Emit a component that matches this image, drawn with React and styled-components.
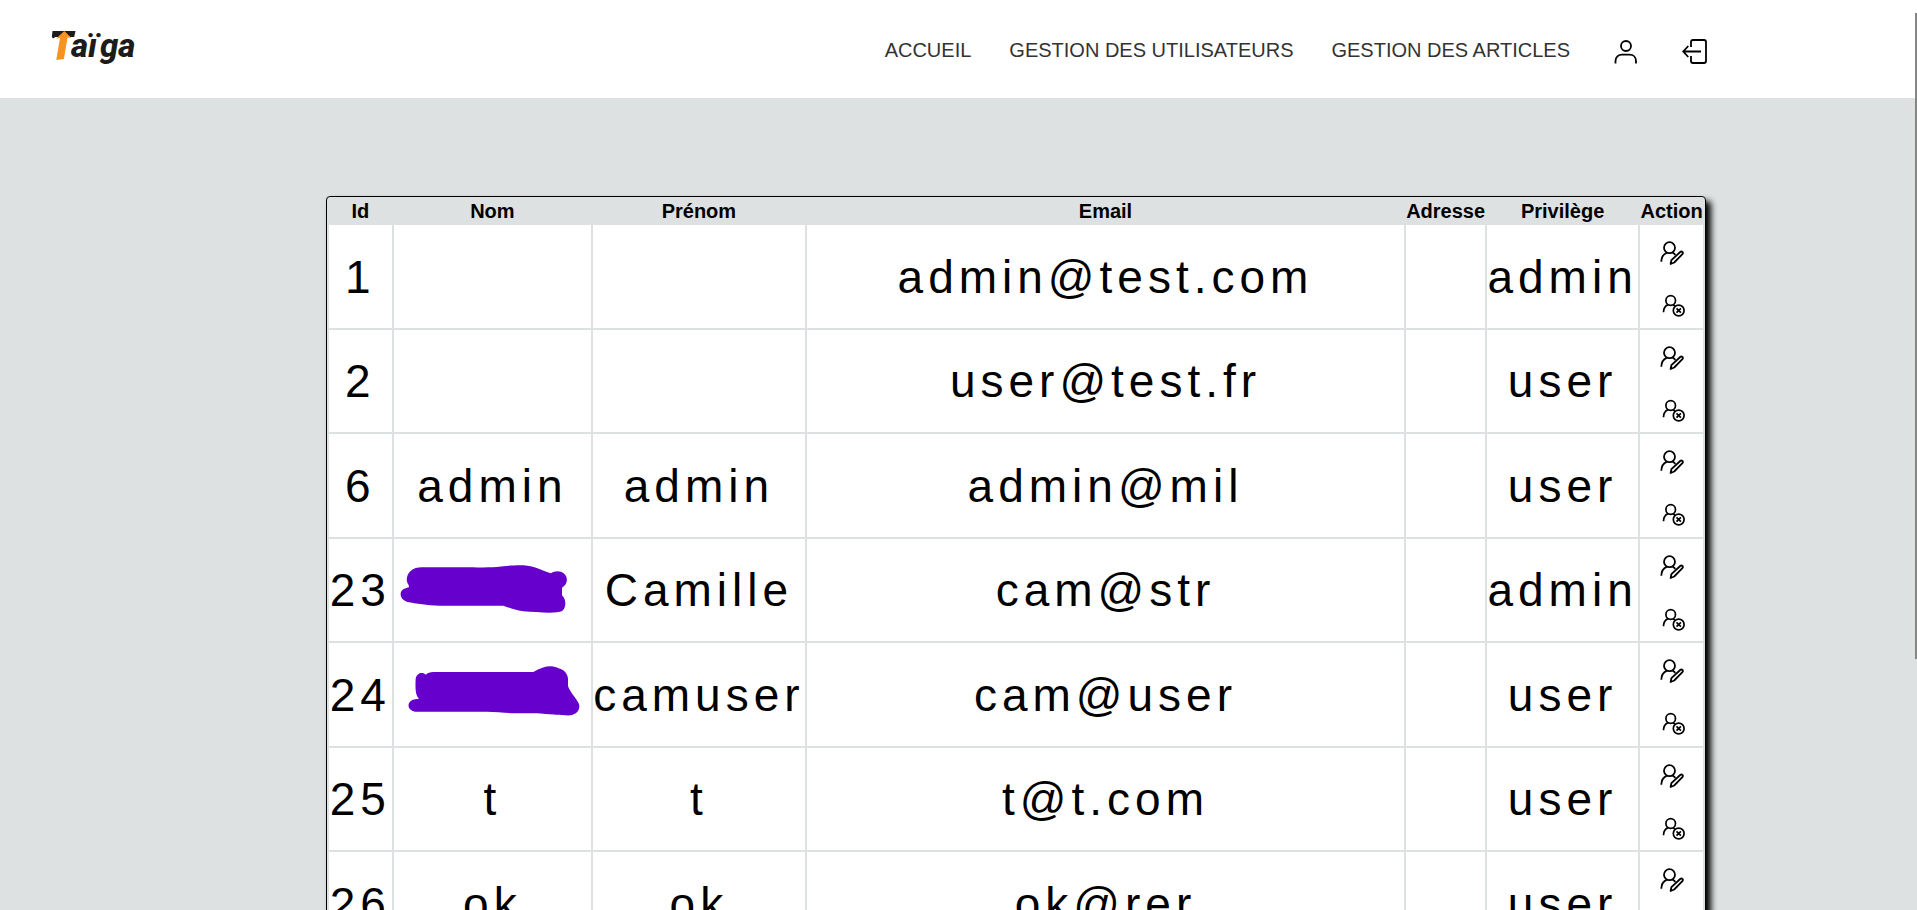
import React from "react";
import styled, { createGlobalStyle } from "styled-components";

const GlobalStyle = createGlobalStyle`
  * { box-sizing: border-box; }
  html { scrollbar-width: none; background: #dde1e1; }
  body {
    margin: 0;
    color: #000;
    font-family: "Liberation Sans", Arial, sans-serif;
    font-size: 20px;
  }
`;

const Header = styled.header`
  display: flex;
  align-items: center;
  justify-content: space-between;
  height: 98px;
  padding: 0 10.9% 0 50px;
  background: #fff;
`;

const LogoLink = styled.a`
  display: block;
  height: 44px;
  svg { display: block; overflow: visible; }
`;

const LogoText = styled.text`
  font-family: Roboto, "Liberation Sans", sans-serif;
  font-size: 33px;
  font-weight: 800;
  font-style: italic;
  fill: #1c1c1c;
`;

const Nav = styled.nav`
  display: flex;
  align-items: center;
  gap: 38px;
  padding-top: 2px;
`;

const NavLink = styled.a`
  color: #333;
  line-height: 24px;
  text-decoration: none;
  text-transform: uppercase;
  white-space: nowrap;
`;

const NavIcons = styled.div`
  display: flex;
  align-items: center;
  gap: 44px;
  padding-left: 6px;
  padding-top: 4px;
`;

const IconButton = styled.button`
  display: block;
  padding: 0;
  border: 0;
  background: none;
  color: #000;
  cursor: pointer;
  svg { display: block; }
`;

const Main = styled.main`
  padding: 98px 0;
`;

const UserTable = styled.table`
  width: 72%;
  margin-left: 17%;
  table-layout: fixed;
  border: 1px solid #000;
  border-radius: 4px;
  border-spacing: 2px;
  box-shadow: 5px 5px 6px #000;
  text-align: center;
`;

const Col = styled.col`
  width: ${(p) => (p.$width ? `${p.$width}px` : "auto")};
`;

const HeadCell = styled.th`
  height: 24px;
  padding: 0;
  line-height: 24px;
  white-space: nowrap;
`;

const Row = styled.tr`
  height: 102px;
  &:nth-child(odd) { height: 103px; }
`;

const Cell = styled.td`
  padding: 0;
  background: #fff;
  font-size: 46px;
  line-height: 52px;
  letter-spacing: 5px;
  white-space: nowrap;
`;

const ActionCell = styled(Cell)`
  padding-top: 16px;
  vertical-align: top;
`;

const Actions = styled.div`
  display: flex;
  flex-direction: column;
  align-items: center;
  gap: 29px;
`;

const Scribble = styled.svg`
  display: block;
  width: 197px;
  height: 102px;
  fill: #6600cc;
`;

const ScrollThumb = styled.div`
  position: fixed;
  top: 13px;
  right: 0;
  width: 2px;
  height: 71vh;
  background: #858585;
`;

const Logo = () => (
  <svg width="92" height="44" viewBox="0 0 92 44" role="img" aria-label="Taïga">
    <path d="M2.5 4h23l-1.3 6H6.500c-1.500 0-2.500.6-3.200 1.500L1.800 10z" fill="#1c1c1c" />
    <path d="M14.300 4l7 6.800-3.800-.3-3.600 21.500-7.600 1L10 11l-3.800.6z" fill="#f7931e" />
    <LogoText x="21" y="30">aï</LogoText>
    <LogoText x="50" y="30">ga</LogoText>
  </svg>
);

const UserIcon = () => (
  <svg width="24" height="24" viewBox="0 0 24 24" fill="none" stroke="currentColor" strokeWidth="1.8">
    <circle cx="12" cy="6" r="5" />
    <path d="M1.500 23.600V21c0-4 2.800-6.300 6.500-6.300h7.500c3.700 0 6.500 2.300 6.500 6.300v2.600" />
  </svg>
);

const LogoutIcon = () => (
  <svg width="26" height="26" viewBox="0 0 26 26" fill="none" stroke="currentColor" strokeWidth="1.8">
    <path d="M9 8V3q0-2 2-2h11q2 0 2 2v19q0 2-2 2H11q-2 0-2-2v-5" />
    <path d="M19 12.500H1.500M6.300 7L1.200 12.500 6.300 18" />
  </svg>
);

const EditIcon = () => (
  <svg width="24" height="24" viewBox="0 0 24 24" fill="none" stroke="currentColor" strokeWidth="1.8">
    <circle cx="9.500" cy="6.700" r="5.500" />
    <path d="M1.300 20.800c.1-4.300 2.200-7.700 5.400-9M12.500 11.700c1.200.5 2 1.200 2.800 2.200" />
    <path d="M10.600 23l.8-3.800 8.800-8.200c1.600-1.400 3.500.6 2.200 2.200l-8.200 8.300z" strokeLinejoin="round" />
  </svg>
);

const DeleteIcon = () => (
  <svg width="26" height="24" viewBox="-1 0 26 24" fill="none" stroke="currentColor" strokeWidth="1.700">
    <circle cx="10.700" cy="6.500" r="4.800" />
    <path d="M3.500 18.200c0-3.600 1.700-6.400 4.700-7.600M13 10.700l2 1.200" />
    <circle cx="18.700" cy="16.500" r="5.400" />
    <path d="M16.500 14.300l4.400 4.400M20.900 14.300l-4.400 4.400" />
  </svg>
);

const RedactedLong = () => (
  <Scribble viewBox="12 -33 591 306" role="img" aria-label="Nom masqué">
    <path d="M95 52H200C240 52 290 53 320 51C350 47 380 45 400 46C436 48 460 64 482 70C494 62 512 62 521 70C536 82 533 103 516 113V136C530 149 529 174 515 184C500 191 440 187 400 184C375 181 358 173 340 167H150C110 167 80 160 52 156C36 150 29 138 33 126C37 117 46 115 57 112L56 105C46 92 50 75 61 64C71 54 83 52 95 52Z" />
  </Scribble>
);

const RedactedShort = () => (
  <Scribble viewBox="12 281 591 306" role="img" aria-label="Nom masqué">
    <path d="M107 373C113 368 120 365 130 365H430C449 354 466 348 482 348C493 349 500 351 505 354C520 356 533 370 534 385V407C541 427 556 439 566 459C573 476 561 492 543 495C520 496 480 492 440 489H375C350 488 320 484 290 484H75C49 480 49 451 76 447L87 445C75 433 76 410 77 385C80 368 98 364 107 373Z" />
  </Scribble>
);

const columns = [
  { label: "Id", width: 63 },
  { label: "Nom", width: 197 },
  { label: "Prénom", width: 212 },
  { label: "Email" },
  { label: "Adresse", width: 79 },
  { label: "Privilège", width: 151 },
  { label: "Action", width: 63 },
];

const users = [
  { id: 1, email: "admin@test.com", role: "admin" },
  { id: 2, email: "user@test.fr", role: "user" },
  { id: 6, nom: "admin", prenom: "admin", email: "admin@mil", role: "user" },
  { id: 23, nom: <RedactedLong />, prenom: "Camille", email: "cam@str", role: "admin" },
  { id: 24, nom: <RedactedShort />, prenom: "camuser", email: "cam@user", role: "user" },
  { id: 25, nom: "t", prenom: "t", email: "t@t.com", role: "user" },
  { id: 26, nom: "ok", prenom: "ok", email: "ok@rer", role: "user" },
];

const UserRow = ({ user }) => (
  <Row>
    <Cell>{user.id}</Cell>
    <Cell>{user.nom}</Cell>
    <Cell>{user.prenom}</Cell>
    <Cell>{user.email}</Cell>
    <Cell />
    <Cell>{user.role}</Cell>
    <ActionCell>
      <Actions>
        <IconButton type="button" aria-label="Modifier"><EditIcon /></IconButton>
        <IconButton type="button" aria-label="Supprimer"><DeleteIcon /></IconButton>
      </Actions>
    </ActionCell>
  </Row>
);

export default function App() {
  return (
    <>
      <GlobalStyle />
      <Header>
        <LogoLink href="#accueil"><Logo /></LogoLink>
        <Nav>
          <NavLink href="#accueil">Accueil</NavLink>
          <NavLink href="#utilisateurs">Gestion des utilisateurs</NavLink>
          <NavLink href="#articles">Gestion des articles</NavLink>
          <NavIcons>
            <IconButton type="button" aria-label="Profil"><UserIcon /></IconButton>
            <IconButton type="button" aria-label="Déconnexion"><LogoutIcon /></IconButton>
          </NavIcons>
        </Nav>
      </Header>
      <Main>
        <UserTable>
          <colgroup>
            {columns.map((c) => <Col key={c.label} $width={c.width} />)}
          </colgroup>
          <thead>
            <tr>
              {columns.map((c) => <HeadCell key={c.label} scope="col">{c.label}</HeadCell>)}
            </tr>
          </thead>
          <tbody>
            {users.map((u) => <UserRow key={u.id} user={u} />)}
          </tbody>
        </UserTable>
      </Main>
      <ScrollThumb />
    </>
  );
}
